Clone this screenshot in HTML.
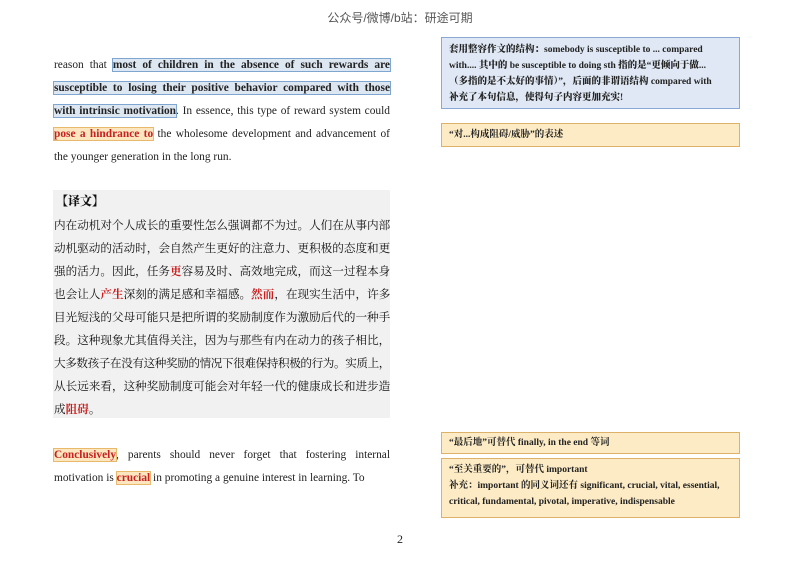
<!DOCTYPE html>
<html><head><meta charset="utf-8"><style>
body{margin:0;width:800px;height:566px;background:#fff;position:relative;overflow:hidden;font-family:"Liberation Serif","Noto Serif CJK SC",serif;color:#222}
.a{position:absolute}
.en{font-size:11.4px;line-height:23px;text-align:justify;text-align-last:justify;white-space:nowrap}
.bh{background:#dde7f2;outline:1px solid #7ea6d0;font-weight:bold}
.yh{background:#fbe6bf;outline:1px solid #e8b96a;color:#c62020;font-weight:bold}
.cn{font-size:11.6px;line-height:23px;white-space:nowrap;text-align:justify;text-align-last:justify;width:336px;overflow:hidden;color:#111}
.r{color:#c81e1e}
.box{position:absolute;left:441px;width:283px;padding:3px 7px;font-size:9.5px;font-weight:bold;line-height:16px;font-family:"Liberation Serif","Noto Serif CJK SC",serif;color:#222;white-space:nowrap}
.bl{background:#dfe8f4;border:1px solid #8aa9d2}
.yl{background:#fcebc4;border:1px solid #dcb26a}
</style></head><body>
<div class="a" style="top:9px;left:0;width:800px;text-align:center;font-size:12px;color:#555;font-family:'Liberation Sans','Noto Sans CJK SC',sans-serif">公众号/微博/b站：研途可期</div>

<div class="a en" style="left:54px;top:54px;width:336px">reason that <span class="bh">most of children in the absence of such rewards are</span></div>
<div class="a en" style="left:54px;top:77px;width:336px"><span class="bh">susceptible to losing their positive behavior compared with those</span></div>
<div class="a en" style="left:54px;top:100px;width:336px"><span class="bh">with intrinsic motivation</span>. In essence, this type of reward system could</div>
<div class="a en" style="left:54px;top:123px;width:336px"><span class="yh">pose a hindrance to</span> the wholesome development and advancement of</div>
<div class="a en" style="left:54px;top:146px;width:336px;text-align-last:left">the younger generation in the long run.</div>

<div class="a" style="left:53px;top:190px;width:337px;height:228px;background:#f1f1f1"></div>
<div class="a" style="left:56px;top:192px;font-size:12px;font-weight:900;font-family:'Noto Serif CJK SC',serif;color:#111">【译文】</div>
<div class="a" style="left:54px;top:214px;width:336px;font-family:'Noto Serif CJK SC','Noto Sans CJK SC',serif">
<div class="cn">内在动机对个人成长的重要性怎么强调都不为过。人们在从事内部</div>
<div class="cn">动机驱动的活动时，会自然产生更好的注意力、更积极的态度和更</div>
<div class="cn">强的活力。因此，任务<b class="r">更</b>容易及时、高效地完成，而这一过程本身</div>
<div class="cn">也会让人<b class="r">产生</b>深刻的满足感和幸福感。<b class="r">然而</b>，在现实生活中，许多</div>
<div class="cn">目光短浅的父母可能只是把所谓的奖励制度作为激励后代的一种手</div>
<div class="cn">段。这种现象尤其值得关注，因为与那些有内在动力的孩子相比，</div>
<div class="cn" style="letter-spacing:-0.4px">大多数孩子在没有这种奖励的情况下很难保持积极的行为。实质上，</div>
<div class="cn">从长远来看，这种奖励制度可能会对年轻一代的健康成长和进步造</div>
<div class="cn" style="text-align-last:left">成<b class="r">阻碍</b>。</div>
</div>

<div class="a en" style="left:54px;top:444px;width:336px"><span class="yh">Conclusively</span>, parents should never forget that fostering internal</div>
<div class="a en" style="left:54px;top:467px;width:336px;text-align-last:left">motivation is <span class="yh">crucial</span> in promoting a genuine interest in learning. To</div>

<div class="a" style="left:0;width:800px;top:532px;text-align:center;font-size:12px">2</div>

<div class="box bl" style="top:37px;height:63px;padding-top:4px;font-weight:900">套用整容作文的结构：somebody is susceptible to ... compared<br>with.... 其中的 be susceptible to doing sth 指的是“更倾向于做...<br>（多指的是不太好的事情）”，后面的非谓语结构 compared with<br>补充了本句信息，使得句子内容更加充实!</div>
<div class="box yl" style="top:123px;height:16px">“对...构成阻碍/威胁”的表述</div>
<div class="box yl" style="top:432px;height:14px;line-height:14px">“最后地”可替代 finally, in the end 等词</div>
<div class="box yl" style="top:458px;height:52px">“至关重要的”，可替代 important<br>补充：important 的同义词还有 significant, crucial, vital, essential,<br>critical, fundamental, pivotal, imperative, indispensable</div>
</body></html>
